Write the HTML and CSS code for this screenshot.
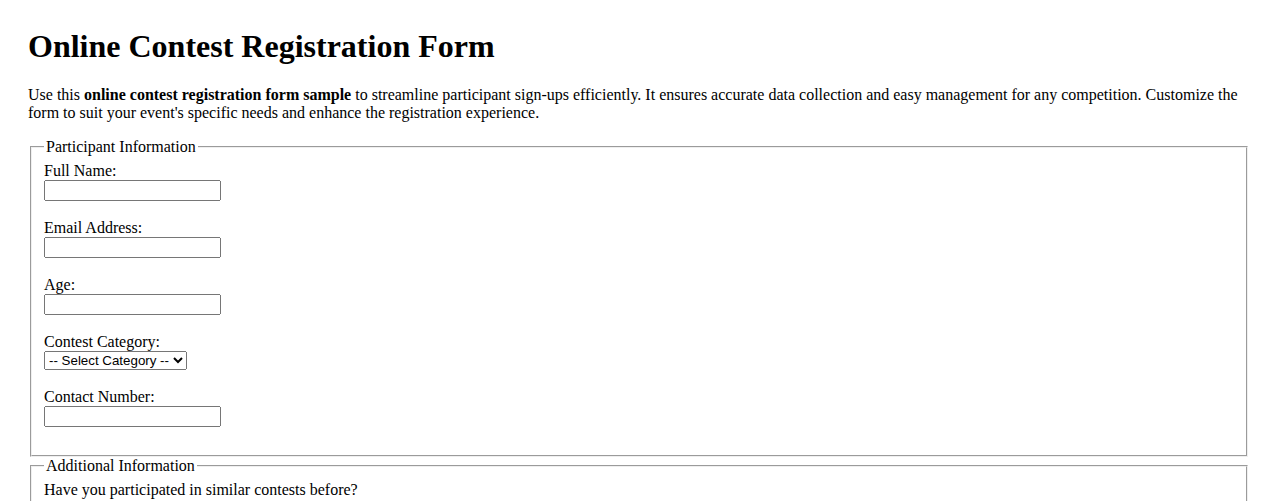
FILE: index.html
```html
<!DOCTYPE html>
<html lang="en">
<head>
    <meta charset="UTF-8">
    <meta name="viewport" content="width=device-width, initial-scale=1.0">
    <title>Online Contest Registration Form</title>
    <link rel="stylesheet" href="styles.css">
</head>
<body>
    <h1 class="form-title">Online Contest Registration Form</h1>

    <p class="form-intro">
        Use this <strong>online contest registration form sample</strong> to streamline participant sign-ups efficiently. It ensures accurate data collection and easy management for any competition. Customize the form to suit your event's specific needs and enhance the registration experience.
    </p>

    <form class="contest-form" action="#" method="post">
        <fieldset>
            <legend>Participant Information</legend>
            <label for="fullName">Full Name:</label><br>
            <input type="text" class="field" id="fullName" name="fullName" required><br><br>

            <label for="email">Email Address:</label><br>
            <input type="email" class="field" id="email" name="email" required><br><br>

            <label for="age">Age:</label><br>
            <input type="number" class="field" id="age" name="age" min="1"><br><br>

            <label for="category">Contest Category:</label><br>
            <select id="category" name="category">
                <option value="">-- Select Category --</option>
                <option value="art">Art</option>
                <option value="writing">Writing</option>
                <option value="photography">Photography</option>
                <option value="coding">Coding</option>
            </select><br><br>

            <label for="phone">Contact Number:</label><br>
            <input type="tel" class="field" id="phone" name="phone"><br><br>
        </fieldset>

        <fieldset>
            <legend>Additional Information</legend>
            <label>Have you participated in similar contests before?</label><br>
            <input type="radio" id="prevYes" name="previous" value="yes">
            <label for="prevYes">Yes</label>
            <input type="radio" id="prevNo" name="previous" value="no">
            <label for="prevNo">No</label><br><br>

            <label for="notes">Additional Comments:</label><br>
            <textarea id="notes" name="notes" rows="4" cols="50"></textarea><br><br>
        </fieldset>

        <br>
        <input type="submit" value="Register">
    </form>
</body>
</html>
```

FILE: styles.css
```css
body {
    font-family: "Liberation Serif", "Times New Roman", serif;
    font-size: 16px;
    color: #000;
    background: #fff;
    padding: 20px;
}

.form-title {
    margin-top: 0;
}

input,
select,
textarea {
    font-family: "Liberation Sans", Arial, sans-serif;
    font-size: 13.333px;
}

.field {
    box-sizing: border-box;
    width: 177px;
}

select {
    width: 143px;
}
```
